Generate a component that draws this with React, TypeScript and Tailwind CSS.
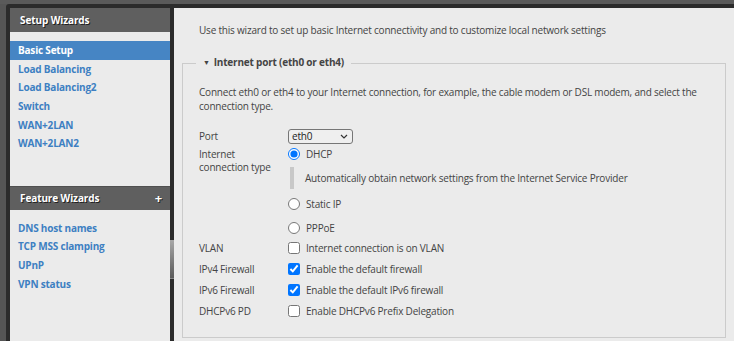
import React from "react";

const setupLinks = ["Load Balancing", "Load Balancing2", "Switch", "WAN+2LAN", "WAN+2LAN2"];
const featureLinks = ["DNS host names", "TCP MSS clamping", "UPnP", "VPN status"];

function Radio({ checked, label }: { checked?: boolean; label: string }) {
  return (
    <div className="flex items-center h-[16px]">
      <input
        type="radio"
        name="conn"
        defaultChecked={checked}
        className="m-0 w-[12px] h-[12px]"
      />
      <span className="ml-[6px]">{label}</span>
    </div>
  );
}

function CheckRow({ label, text, checked }: { label: string; text: string; checked?: boolean }) {
  return (
    <div className="flex items-center h-[21px]">
      <div className="w-[89px]">{label}</div>
      <input type="checkbox" defaultChecked={checked} className="m-0 w-[12px] h-[12px]" />
      <span className="ml-[6px]">{text}</span>
    </div>
  );
}

export default function App() {
  return (
    <div className="w-[734px] h-[341px] bg-[#555] overflow-hidden flex flex-col font-['Open_Sans',sans-serif] text-[10px] tracking-[-0.2px]">
      <div className="h-[4px] bg-[#5a5a5a]" />
      <div className="flex-1 flex ml-[6px] pt-[4px] pl-[4px] bg-[#2b2b2b] rounded-tl-[3px] min-h-0">
        {/* Sidebar */}
        <div className="w-[160px] bg-[#ebebeb] flex flex-col">
          <div className="h-[24px] flex items-center pl-[10px] bg-[#5f5f5f] text-white font-bold tracking-[-0.1px] [text-shadow:1px_1px_0_#222]">
            Setup Wizards
          </div>
          <div className="mt-[9px] h-[19px] flex items-center pl-[8px] bg-[#4685c4] text-white font-bold">
            Basic Setup
          </div>
          {setupLinks.map((l) => (
            <div key={l} className="h-[18.6px] flex items-center pl-[8px] text-[#3d7fc2] font-bold">
              {l}
            </div>
          ))}
          <div className="mt-[33px] h-[24px] flex items-center justify-between pl-[10px] pr-[8px] bg-[#5f5f5f] border-t border-[#505050] text-white font-bold tracking-[-0.1px] [text-shadow:1px_1px_0_#222]">
            <span>Feature Wizards</span>
            <span className="text-[13px] leading-none">+</span>
          </div>
          <div className="mt-[9px]">
            {featureLinks.map((l) => (
              <div key={l} className="h-[18.6px] flex items-center pl-[8px] text-[#3d7fc2] font-bold">
                {l}
              </div>
            ))}
          </div>
        </div>

        {/* Sidebar scrollbar */}
        <div className="w-[4px] flex flex-col">
          <div className="h-[232px]" />
          <div className="h-[39px] bg-gradient-to-b from-[#a8a8a8] to-[#5a5a5a] border-b border-[#888]" />
        </div>

        {/* Content */}
        <div className="flex-1 bg-[#ebebeb] text-[#444] leading-[14px]">
          <div className="pt-[15px] pl-[25px]">
            Use this wizard to set up basic Internet connectivity and to customize local network settings
          </div>
          <fieldset className="mt-[18px] ml-[8px] mr-[8px] border border-[#cbcbcb] pl-[16px] pr-[16px] pb-[16px]">
            <legend className="ml-[-3px] px-[7px] font-bold text-[#444] leading-[14px]">
              <span className="text-[7px] mr-[4px] relative top-[-1px]">▼</span>
              Internet port (eth0 or eth4)
            </legend>
            <div className="mt-[14px]">
              Connect eth0 or eth4 to your Internet connection, for example, the cable modem or DSL modem, and select the connection type.
            </div>

            <div className="mt-[13px] flex items-center h-[20px]">
              <div className="w-[89px]">Port</div>
              <div className="w-[65px] h-[15px] rounded-[3px] border border-[#767676] bg-[#efefef] flex items-center justify-between pl-[3px] pr-[4px] text-[#222] leading-none">
                <span>eth0</span>
                <svg width="8" height="5" viewBox="0 0 8 5" fill="none">
                  <path d="M1 1l3 3 3-3" stroke="#333" strokeWidth="1.2" />
                </svg>
              </div>
            </div>

            <div className="flex">
              <div className="w-[89px] pt-[2px] leading-[13px]">
                Internet
                <br />
                connection type
              </div>
              <div className="flex flex-col">
                <Radio checked label="DHCP" />
                <div className="mt-[5px] h-[22px] flex items-center">
                  <div className="w-[4px] h-full bg-[#c8c8c8] ml-[2px]" />
                  <span className="ml-[11px]">Automatically obtain network settings from the Internet Service Provider</span>
                </div>
                <div className="mt-[7px]">
                  <Radio label="Static IP" />
                </div>
                <div className="mt-[8px]">
                  <Radio label="PPPoE" />
                </div>
              </div>
            </div>

            <div className="mt-[1px]">
              <CheckRow label="VLAN" text="Internet connection is on VLAN" />
              <CheckRow label="IPv4 Firewall" text="Enable the default firewall" checked />
              <CheckRow label="IPv6 Firewall" text="Enable the default IPv6 firewall" checked />
              <CheckRow label="DHCPv6 PD" text="Enable DHCPv6 Prefix Delegation" />
            </div>
          </fieldset>
        </div>
      </div>
    </div>
  );
}
